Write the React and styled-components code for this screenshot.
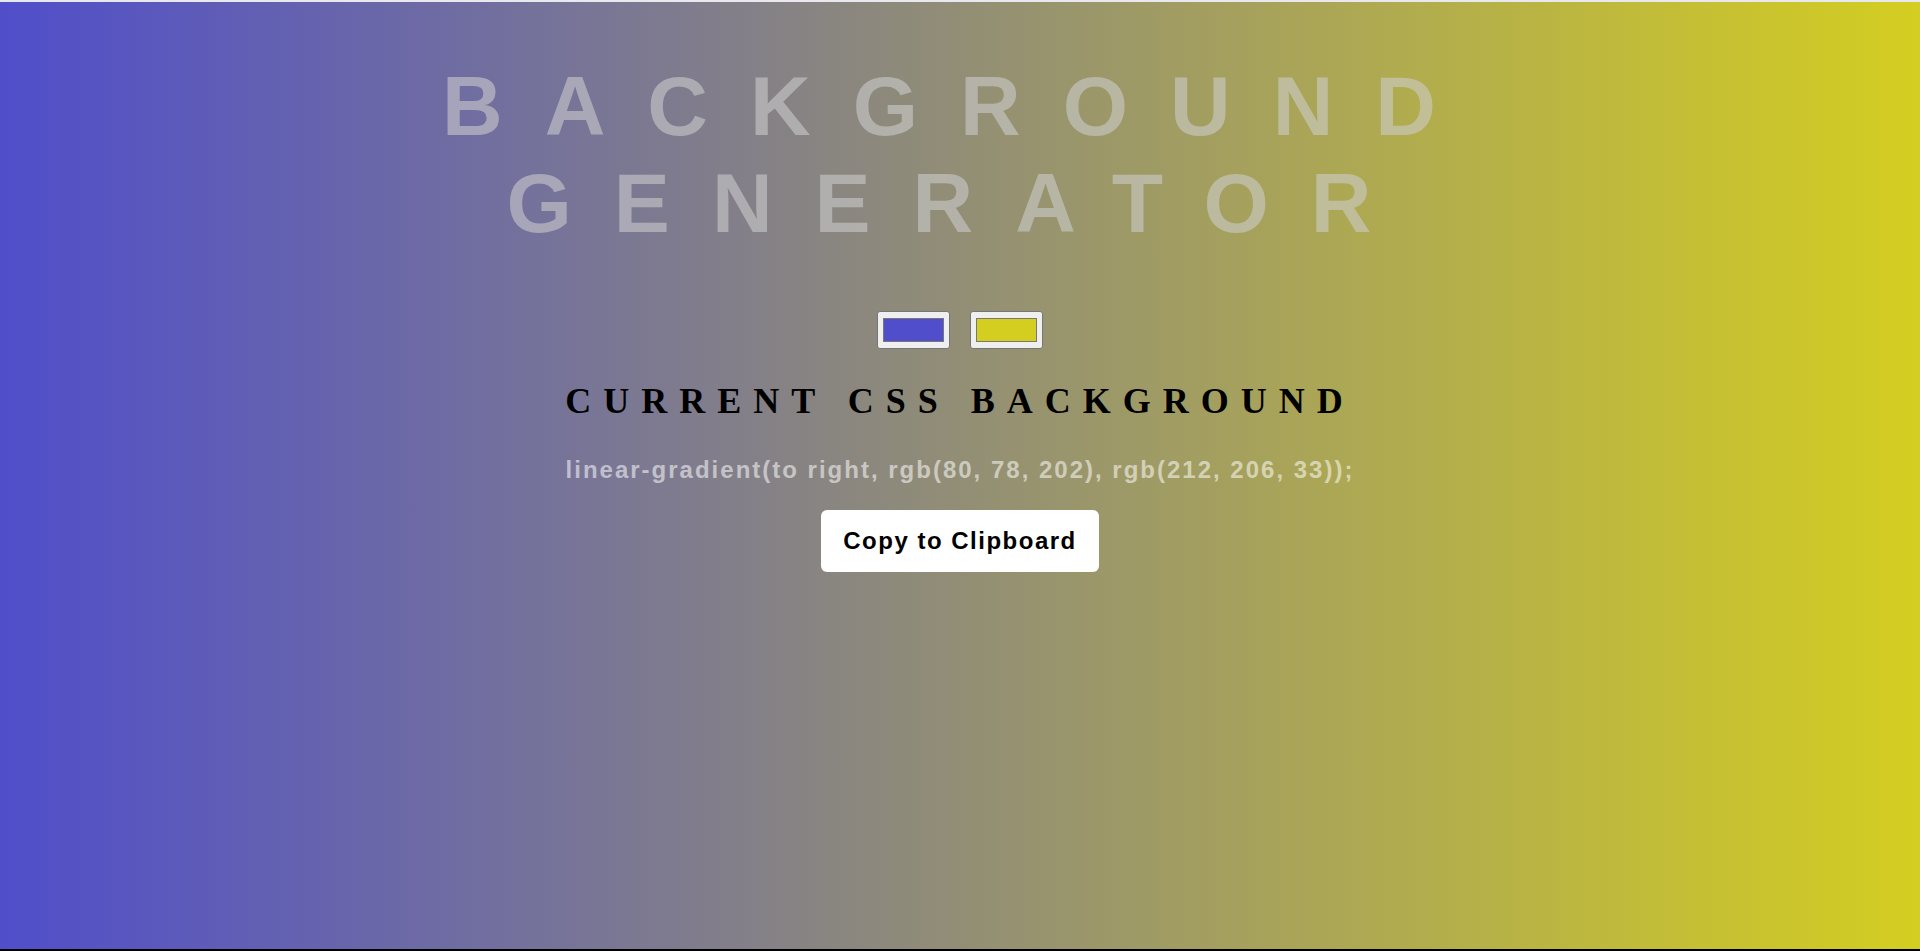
import React, { useState } from 'react'
import styled, { createGlobalStyle } from 'styled-components'

const GlobalStyle = createGlobalStyle`
    html, body {
        margin: 0;
        padding: 0;
    }
    body {
        font-family: "Liberation Sans", Arial, sans-serif;
    }
`

const Page = styled.div`
    display: flex;
    flex-direction: column;
    height: 100vh;
`

const TopEdge = styled.div`
    height: 2px;
    background: #e8e8ee;
`

const BottomEdge = styled.div`
    height: 2px;
    background: #000;
`

const Canvas = styled.main(({ from, to }) => `
    flex: 1;
    display: flex;
    flex-direction: column;
    align-items: center;
    text-align: center;
    background: linear-gradient(to right, ${from}, ${to});
`)

const Title = styled.h1`
    margin: 56px 0 0;
    font: 700 84px "Liberation Sans", Arial, sans-serif;
    letter-spacing: 42px;
    text-transform: uppercase;
    color: rgba(205, 205, 205, 0.58);
`

const Pickers = styled.div`
    display: flex;
    gap: 20px;
    margin-top: 59px;
`

const ColorInput = styled.input`
    width: 73px;
    height: 38px;
    padding: 0;
    box-sizing: border-box;
    border: 1px solid #767676;
    border-radius: 3px;
    background: #efefef;
    cursor: pointer;

    &::-webkit-color-swatch-wrapper {
        padding: 6px 5px;
    }
    &::-webkit-color-swatch {
        border: 1px solid #777;
        border-radius: 0;
    }
`

const Heading = styled.h3`
    margin: 31px 0 0;
    font: 700 36px "Liberation Serif", "Times New Roman", serif;
    letter-spacing: 12px;
    text-transform: uppercase;
    color: #000;
`

const Code = styled.p`
    margin: 34px 0 0;
    font: 700 24px "Liberation Sans", Arial, sans-serif;
    letter-spacing: 2px;
    color: rgba(255, 255, 255, 0.55);
`

const CopyButton = styled.button`
    margin-top: 26px;
    padding: 17px 22px;
    border: none;
    border-radius: 6px;
    background: #fff;
    color: #000;
    font: 700 24px "Liberation Sans", Arial, sans-serif;
    letter-spacing: 1.5px;
    cursor: pointer;
`

const toRgb = hex => {
    const n = parseInt(hex.slice(1), 16)
    return `rgb(${ (n >> 16) & 255 }, ${ (n >> 8) & 255 }, ${ n & 255 })`
}

function App () {
    const [color1, setColor1] = useState('#504eca')
    const [color2, setColor2] = useState('#d4ce21')

    const css = `linear-gradient(to right, ${ toRgb(color1) }, ${ toRgb(color2) });`

    return (
        <Page>
            <GlobalStyle />
            <TopEdge />
            <Canvas from={color1} to={color2}>
                <Title>Background Generator</Title>
                <Pickers>
                    <ColorInput type='color' value={color1} onChange={e => setColor1(e.target.value)} />
                    <ColorInput type='color' value={color2} onChange={e => setColor2(e.target.value)} />
                </Pickers>
                <Heading>Current CSS Background</Heading>
                <Code>{ css }</Code>
                <CopyButton onClick={() => navigator.clipboard && navigator.clipboard.writeText(css)}>
                    Copy to Clipboard
                </CopyButton>
            </Canvas>
            <BottomEdge />
        </Page>
    )
}

export default App
